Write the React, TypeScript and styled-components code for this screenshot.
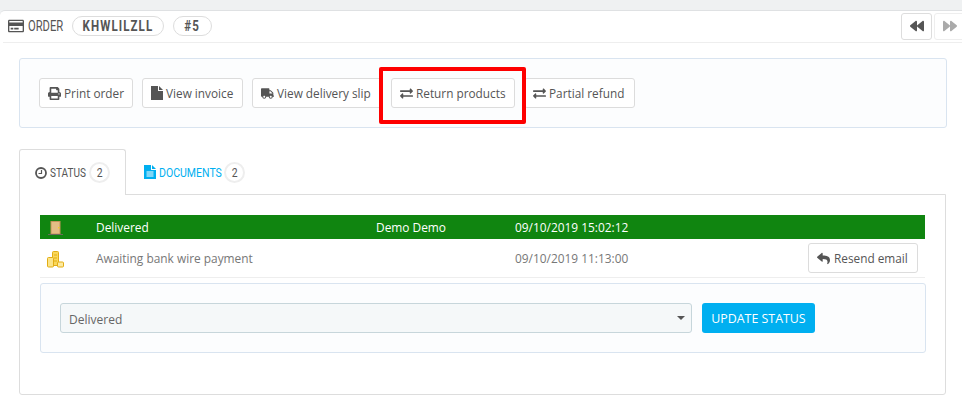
import { FC, ReactNode } from "react";
import styled, { createGlobalStyle } from "styled-components";
import {
  FaPrint,
  FaTruck,
  FaExchangeAlt,
  FaReply,
  FaBackward,
  FaForward,
  FaRegCreditCard,
} from "react-icons/fa";

const GlobalStyle = createGlobalStyle`
  html, body {
    margin: 0;
    padding: 0;
    background: #eff1f2;
  }
  body {
    width: 962px;
    height: 402px;
    overflow: hidden;
    font-family: "Open Sans", sans-serif;
    font-size: 12px;
    color: #555;
  }
  * { box-sizing: border-box; }
`;

const Page = styled.div`
  padding-top: 10px;
  height: 402px;
`;

const Panel = styled.div`
  position: relative;
  height: 392px;
  background: #fff;
  border-top: 1px solid #dfe1e3;
  border-radius: 5px 0 0 0;
  padding: 0 0 0 19px;
`;

const Heading = styled.div`
  display: flex;
  align-items: center;
  height: 32px;
  margin-left: -16px;
  padding: 0 0 1px 5px;
  border-bottom: 1px solid #eee;
  color: #555;
`;

// condensed caps: no condensed family is installed, so Roboto is squeezed
const Narrow = styled.span<{ width: number; squeeze: number }>`
  display: inline-block;
  flex: none;
  width: ${(props) => props.width}px;
  font-family: "Roboto", sans-serif;
  white-space: nowrap;
  transform: scaleX(${(props) => props.squeeze});
  transform-origin: left center;
`;

const HeadingLabel = styled(Narrow)`
  font-size: 14px;
  margin-left: 4px;
  margin-right: 9px;
`;

const Pill = styled.span<{ wide?: boolean }>`
  display: inline-flex;
  align-items: center;
  justify-content: center;
  height: 20px;
  width: ${(props) => (props.wide ? "92px" : "39px")};
  margin-right: 9px;
  border: 1px solid #ddd;
  border-radius: 10px;
  color: #555;
`;

const PillText = styled.span`
  flex: none;
  font-family: "Roboto", sans-serif;
  font-size: 15px;
  font-weight: 700;
  letter-spacing: 1.4px;
  transform: scaleX(0.77);
`;

const Pager = styled.div`
  margin-left: auto;
  margin-right: -3px;
  display: flex;
  gap: 2px;
`;

const PagerButton = styled.span<{ disabled?: boolean }>`
  display: flex;
  align-items: center;
  justify-content: center;
  width: 31px;
  height: 27px;
  border: 1px solid ${(props) => (props.disabled ? "#eee" : "#ddd")};
  border-radius: 3px;
  font-size: 14px;
  color: ${(props) => (props.disabled ? "#aaa" : "#555")};
`;

const Well = styled.div`
  display: flex;
  align-items: center;
  background: #fcfdfe;
  border: 1px solid #d9e4f0;
  border-radius: 3px;
`;

const ActionsWell = styled(Well)`
  width: 928px;
  height: 70px;
  margin-top: 15px;
  padding-left: 19px;
  gap: 9px;
`;

const Button = styled.span<{ width: number }>`
  display: inline-flex;
  align-items: center;
  gap: 3px;
  width: ${(props) => props.width}px;
  height: 30px;
  flex: none;
  padding-left: 8px;
  background: #fff;
  border: 1px solid #dcdcdc;
  border-radius: 3px;
  font-size: 11.8px;
  color: #555;
  white-space: nowrap;

  svg {
    font-size: 13px;
    flex: none;
  }
`;

const ResendButton = styled(Button)`
  gap: 4px;
`;

const Highlight = styled.div`
  position: absolute;
  left: 379px;
  top: 56px;
  width: 147px;
  height: 57px;
  border: 4px solid #fe0000;
  border-radius: 2px;
  pointer-events: none;
`;

const Tabs = styled.div`
  display: flex;
  margin-top: 21px;
  height: 45px;
`;

const Tab = styled.div<{ active?: boolean }>`
  display: flex;
  align-items: center;
  width: ${(props) => (props.active ? "107px" : "auto")};
  height: 46px;
  padding-left: ${(props) => (props.active ? "15px" : "18px")};
  background: ${(props) => (props.active ? "#fff" : "transparent")};
  border: ${(props) => (props.active ? "1px solid #ddd" : "none")};
  border-bottom: none;
  border-radius: 3px 3px 0 0;
  color: ${(props) => (props.active ? "#555" : "#00aff0")};
  position: relative;
  z-index: 1;
`;

const TabLabel = styled(Narrow)`
  font-size: 13px;
  margin-left: 3px;
`;

const Count = styled.span`
  display: inline-flex;
  align-items: center;
  justify-content: center;
  flex: none;
  width: 21px;
  height: 21px;
  margin-left: 3px;
  border: 2px solid #eee;
  border-radius: 50%;
  font-family: "Roboto", sans-serif;
  font-size: 13px;
  color: #555;
`;

const CountDigit = styled.span`
  transform: scaleX(0.8);
`;

const TabBody = styled.div`
  width: 927px;
  height: 201px;
  padding: 20px 20px 0 20px;
  border: 1px solid #ddd;
  border-radius: 0 0 3px 3px;
`;

const Row = styled.div<{ current?: boolean }>`
  display: grid;
  grid-template-columns: 56px 280px 139px 1fr auto;
  align-items: center;
  width: 885px;
  height: ${(props) => (props.current ? "24px" : "39px")};
  padding-right: ${(props) => (props.current ? "0" : "7px")};
  background: ${(props) => (props.current ? "#108510" : "transparent")};
  border-bottom: ${(props) => (props.current ? "none" : "1px solid #eee")};
  color: ${(props) => (props.current ? "#fff" : "#777")};
  font-size: 11.9px;
`;

const RowIcon = styled.span`
  display: flex;
  justify-content: center;
  padding: 2px 26px 0 0;
`;

const UpdateWell = styled(Well)`
  width: 886px;
  height: 70px;
  margin-top: 5px;
  padding-left: 19px;
  gap: 10px;
`;

const Select = styled.div`
  display: flex;
  align-items: center;
  justify-content: space-between;
  width: 632px;
  height: 30px;
  padding: 2px 0 0 8px;
  background: #f5f8f9;
  border: 1px solid #c7d6db;
  border-radius: 3px;
  font-size: 12px;
  color: #666;
`;

const Caret = styled.span`
  width: 0;
  height: 0;
  margin: -2px 6px 0 0;
  border-left: 4px solid transparent;
  border-right: 4px solid transparent;
  border-top: 4px solid #555;
`;

const Primary = styled.span`
  display: flex;
  align-items: center;
  justify-content: center;
  width: 113px;
  height: 30px;
  padding-top: 1px;
  background: #00aff0;
  border-radius: 3px;
  color: #fff;
  font-size: 12.4px;
`;

const ClockIcon: FC = () => (
  <svg width="12" height="12" viewBox="0 0 12 12" fill="none" stroke="currentColor">
    <circle cx="6" cy="6" r="5" strokeWidth="1.8" />
    <path d="M6.5 3v3.5H3.5" strokeWidth="1.2" />
  </svg>
);

const FileIcon: FC = () => (
  <svg width="12" height="14" viewBox="0 0 12 14" fill="currentColor">
    <path d="M0 0h7v5h5v9H0z" />
    <path d="M8 0l4 4H8z" />
  </svg>
);

const DocumentIcon: FC = () => (
  <svg width="12" height="14" viewBox="0 0 12 14" fill="currentColor">
    <path d="M0 0h7v5h5v9H0z" />
    <path d="M8 0l4 4H8z" />
    <path d="M2.5 7h7M2.5 9h7M2.5 11h7" stroke="#fff" />
  </svg>
);

const Door: FC = () => (
  <svg width="15" height="14" viewBox="0 0 15 14">
    <rect x="2.5" y="0" width="10" height="13" fill="#c4935a" />
    <rect x="3.5" y="1" width="8" height="11.5" fill="#e3bd85" />
    <rect x="10" y="6" width="1.4" height="1.4" fill="#f2d020" />
    <rect x="0" y="13" width="15" height="1" fill="#6b6b5a" />
  </svg>
);

const Coins: FC = () => (
  <svg width="17" height="17" viewBox="0 0 17 17">
    <rect x="5.5" y="0.5" width="6" height="14" rx="1" fill="#f9d75a" stroke="#e2ad14" />
    <path d="M7 4h3M7 7h3M7 10h3" stroke="#e2ad14" />
    <rect x="0.5" y="6.5" width="6" height="9.5" rx="1" fill="#fbe488" stroke="#e2ad14" />
    <rect x="10.5" y="11" width="6" height="5" rx="1" fill="#fdeaa0" stroke="#e2ad14" />
  </svg>
);

const actions: { label: string; icon: ReactNode; width: number }[] = [
  { label: "Print order", icon: <FaPrint />, width: 94 },
  { label: "View invoice", icon: <FileIcon />, width: 101 },
  { label: "View delivery slip", icon: <FaTruck />, width: 130 },
  { label: "Return products", icon: <FaExchangeAlt />, width: 124 },
  { label: "Partial refund", icon: <FaExchangeAlt />, width: 111 },
];

const App: FC = () => {
  return (
    <Page>
      <GlobalStyle />
      <Panel>
        <Heading>
          <FaRegCreditCard size={16} />
          <HeadingLabel width={35} squeeze={0.8}>
            ORDER
          </HeadingLabel>
          <Pill wide>
            <PillText>KHWLILZLL</PillText>
          </Pill>
          <Pill>
            <PillText>#5</PillText>
          </Pill>
          <Pager>
            <PagerButton>
              <FaBackward />
            </PagerButton>
            <PagerButton disabled>
              <FaForward />
            </PagerButton>
          </Pager>
        </Heading>
        <ActionsWell>
          {actions.map((action) => (
            <Button key={action.label} width={action.width}>
              {action.icon}
              {action.label}
            </Button>
          ))}
        </ActionsWell>
        <Highlight />
        <Tabs>
          <Tab active>
            <ClockIcon />
            <TabLabel width={36} squeeze={0.77}>
              STATUS
            </TabLabel>
            <Count>
              <CountDigit>2</CountDigit>
            </Count>
          </Tab>
          <Tab>
            <DocumentIcon />
            <TabLabel width={62} squeeze={0.81}>
              DOCUMENTS
            </TabLabel>
            <Count>
              <CountDigit>2</CountDigit>
            </Count>
          </Tab>
        </Tabs>
        <TabBody>
          <Row current>
            <RowIcon>
              <Door />
            </RowIcon>
            <span>Delivered</span>
            <span>Demo Demo</span>
            <span>09/10/2019 15:02:12</span>
          </Row>
          <Row>
            <RowIcon>
              <Coins />
            </RowIcon>
            <span>Awaiting bank wire payment</span>
            <span />
            <span>09/10/2019 11:13:00</span>
            <ResendButton width={110}>
              <FaReply />
              Resend email
            </ResendButton>
          </Row>
          <UpdateWell>
            <Select>
              Delivered
              <Caret />
            </Select>
            <Primary>UPDATE STATUS</Primary>
          </UpdateWell>
        </TabBody>
      </Panel>
    </Page>
  );
};

export default App;
